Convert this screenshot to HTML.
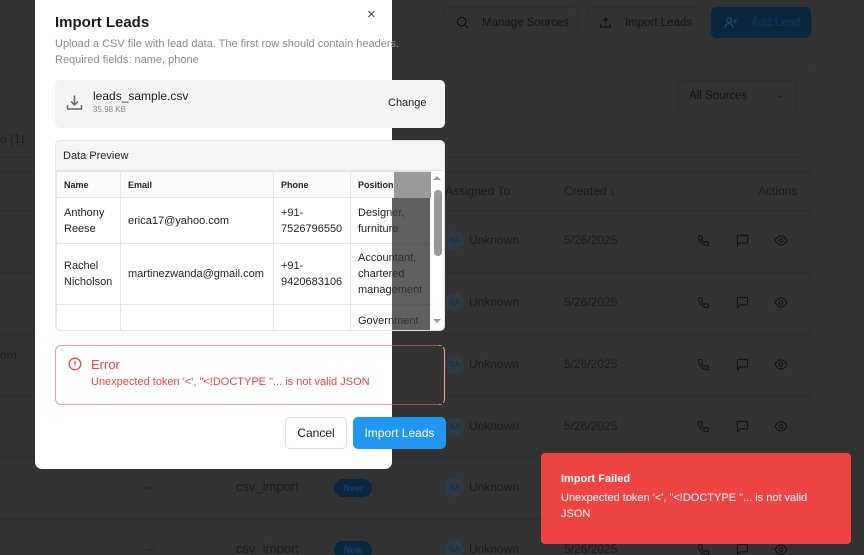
<!DOCTYPE html>
<html style="background:#333"><head><meta charset="utf-8"><style>
*{box-sizing:border-box;margin:0;padding:0}
html,body{width:864px;height:555px;overflow:hidden;background:#333333}
body{font-family:"Liberation Sans","DejaVu Sans",sans-serif;position:relative;color:#1a1a1a}
.a{position:absolute}
.bg{color:#1c1c1c;font-size:12px}
.line{position:absolute;height:1px;background:#2c2c2c}
.btn{position:absolute;border:1px solid #2e2e2e;border-radius:5px;font-size:11.5px;color:#141414;display:flex;align-items:center}
.na{position:absolute;width:19px;height:19px;border-radius:50%;background:#2f3a44;color:#10304d;font-size:8px;display:flex;align-items:center;justify-content:center}
.modal{position:absolute;left:35px;top:-8px;width:357px;height:477px;background:#fff;border-radius:7px}
td{border:1px solid #e6e6e6;font-size:11px;padding:0 7px;vertical-align:middle;line-height:16px;color:#222}
table{border-collapse:collapse;table-layout:fixed}
th{border:1px solid #e6e6e6;font-size:9px;font-weight:bold;text-align:left;padding:0 7px;height:26px;background:#fafafa;color:#222}
</style></head><body>
<div class="a" style="left:0;top:0;width:864px;height:555px;background:#333333"></div>
<div class="btn" style="left:442px;top:7px;width:136px;height:31px;padding-left:13px"><svg width="13" height="13" viewBox="0 0 14 14" fill="none" stroke="#141414" stroke-width="1.4"><circle cx="6" cy="6" r="4.5"/><path d="M9.5 9.5L13 13"/></svg><span style="margin-left:13px">Manage Sources</span></div>
<div class="btn" style="left:586px;top:7px;width:119px;height:31px;padding-left:12px"><svg width="13" height="13" viewBox="0 0 14 14" fill="none" stroke="#141414" stroke-width="1.4"><path d="M7 9V2M4 5l3-3 3 3M2 9v3h10V9"/></svg><span style="margin-left:13px">Import Leads</span></div>
<div class="btn" style="left:711px;top:7px;width:100px;height:31px;padding-left:12px;background:#0b2740;border-color:#0b2740;color:#0f3a5e"><svg width="14" height="13" viewBox="0 0 14 13" fill="none" stroke="#184a73" stroke-width="1.3"><circle cx="5" cy="4" r="2.5"/><path d="M1 12c0-3 2-4.5 4-4.5s4 1.5 4 4.5M11 3v4M9 5h4"/></svg><span style="margin-left:13px">Add Lead</span></div>
<div class="a" style="left:-10px;top:66px;width:820px;height:500px;border:1px solid #303030;border-radius:8px"></div>
<div class="btn" style="left:678px;top:80px;width:119px;height:31px;padding-left:10px;justify-content:space-between;padding-right:12px"><span>All Sources</span><span style="font-size:9px">&#8964;</span></div>
<div class="line" style="left:0;top:157px;width:797px"></div>
<div class="line" style="left:0;top:171px;width:810px"></div>
<div class="a bg" style="left:0;top:132px;font-size:12px">o (1)</div>
<div class="a bg" style="left:445px;top:184px">Assigned To</div>
<div class="a bg" style="left:564px;top:184px">Created ↓</div>
<div class="a bg" style="left:758px;top:184px">Actions</div>
<div class="a bg" style="left:0;top:348px">om</div>
<div id="rows"></div>
<script>
var ys=[241,303,365,427,488,550],h='';
ys.forEach(function(y,i){
h+='<div class="line" style="left:0;top:'+(y-31)+'px;width:810px"></div>';
h+='<div class="na" style="left:445px;top:'+(y-10)+'px">NA</div>';
h+='<div class="a bg" style="left:469px;top:'+(y-8)+'px;font-size:12px">Unknown</div>';
h+='<div class="a bg" style="left:564px;top:'+(y-8)+'px;font-size:12px">5/26/2025</div>';
h+='<svg class="a" style="left:697px;top:'+(y-7)+'px" width="13" height="13" viewBox="0 0 14 14" fill="none" stroke="#141414" stroke-width="1.2"><path d="M3 1.5l2 .3 1 3-1.3 1.2a8 8 0 003.3 3.3L9.2 8l3 1 .3 2a1.5 1.5 0 01-1.7 1.5A10 10 0 011.5 3.2 1.5 1.5 0 013 1.5z"/></svg>';
h+='<svg class="a" style="left:736px;top:'+(y-7)+'px" width="13" height="13" viewBox="0 0 14 14" fill="none" stroke="#141414" stroke-width="1.2"><path d="M1.5 1.5h11v8h-8l-3 3z"/></svg>';
h+='<svg class="a" style="left:774px;top:'+(y-6)+'px" width="14" height="11" viewBox="0 0 14 11" fill="none" stroke="#141414" stroke-width="1.2"><path d="M1 5.5C3 2 5 1 7 1s4 1 6 4.5C11 9 9 10 7 10S3 9 1 5.5z"/><circle cx="7" cy="5.5" r="1.8"/></svg>';
if(i>=4){h+='<div class="a bg" style="left:146px;top:'+(y-8)+'px">--</div><div class="a bg" style="left:236px;top:'+(y-9)+'px;font-size:13px">csv_import</div><div class="a" style="left:334px;top:'+(y-9)+'px;width:38px;height:18px;border-radius:9px;background:#0b2740;color:#15426a;font-size:9px;font-weight:bold;text-align:center;line-height:18px">New</div>';}
});
document.getElementById('rows').innerHTML=h;
</script>
<div class="modal"></div>
<div class="a" style="left:55px;top:14px;font-size:15px;font-weight:bold;color:#1a1a1a">Import Leads</div>
<div class="a" style="left:367px;top:6px;font-size:15px;color:#444">×</div>
<div class="a" style="left:55px;top:36px;font-size:11px;color:#8a8a8a;line-height:16px;width:350px;white-space:nowrap">Upload a CSV file with lead data. The first row should contain headers.<br>Required fields: name, phone</div>
<div class="a" style="left:55px;top:80px;width:390px;height:48px;background:#f4f4f3;border-radius:5px"></div>
<svg class="a" style="left:66px;top:94px" width="17" height="17" viewBox="0 0 17 17" fill="none" stroke="#666" stroke-width="1.5"><path d="M8.5 1.5v9M5 7.5l3.5 3.5 3.5-3.5M1.5 11v4h14v-4"/></svg>
<div class="a" style="left:93px;top:89px;font-size:12px;color:#1a1a1a">leads_sample.csv</div>
<div class="a" style="left:93px;top:105px;font-size:8px;color:#888">35.98 KB</div>
<div class="a" style="left:388px;top:97px;font-size:11px;color:#1a1a1a">Change</div>
<div class="a" style="left:55px;top:140px;width:390px;height:191px;border:1px solid #e3e3e3;border-radius:5px;overflow:hidden;background:#fff">
<div style="height:30px;background:#f5f5f4;font-size:11px;padding:9px 7px;color:#222;border-bottom:1px solid #e3e3e3">Data Preview</div>
<table style="width:375px">
<colgroup><col style="width:64px"><col style="width:153px"><col style="width:77px"><col style="width:81px"></colgroup>
<tr><th>Name</th><th>Email</th><th>Phone</th><th style="position:relative">Position<div style="position:absolute;left:43px;top:0;width:38px;height:26px;background:#999"></div></th></tr>
<tr style="height:46px"><td>Anthony Reese</td><td>erica17@yahoo.com</td><td>+91-<br>7526796550</td><td style="white-space:nowrap">Designer,<br>furniture</td></tr>
<tr style="height:61px"><td>Rachel Nicholson</td><td>martinezwanda@gmail.com</td><td>+91-<br>9420683106</td><td style="white-space:nowrap">Accountant,<br>chartered<br>management</td></tr>
<tr style="height:28px"><td></td><td></td><td></td><td style="vertical-align:bottom;padding-bottom:3px">Government</td></tr>
</table>
<div style="position:absolute;left:375px;top:30px;width:14px;height:160px;background:#fff"></div>
<div style="position:absolute;left:378px;top:49px;width:8px;height:66px;background:#999;border-radius:4px"></div>
<div style="position:absolute;left:377px;top:35px;border:4px solid transparent;border-bottom:4px solid #999;border-top:0"></div>
<div style="position:absolute;left:377px;top:178px;border:4px solid transparent;border-top:4px solid #999;border-bottom:0"></div>
</div>
<div class="a" style="left:392px;top:198px;width:38px;height:132px;background:rgba(51,51,51,.78)"></div>
<div class="a" style="left:55px;top:345px;width:390px;height:60px;border:1px solid #f79b9b;border-radius:6px"></div>
<div class="a" style="left:392px;top:346px;width:51px;height:58px;background:#333"></div>
<div class="a" style="left:392px;top:345px;width:47px;height:1px;background:#9a5050"></div>
<div class="a" style="left:392px;top:404px;width:47px;height:1px;background:#9a5050"></div>
<svg class="a" style="left:68px;top:357px" width="14" height="14" viewBox="0 0 14 14" fill="none" stroke="#ef4444" stroke-width="1.3"><circle cx="7" cy="7" r="5.8"/><path d="M7 4v3.5M7 9.5v.5"/></svg>
<div class="a" style="left:91px;top:357px;font-size:13px;color:#ef4444">Error</div>
<div class="a" style="left:91px;top:376px;font-size:11px;color:#ef4444;white-space:nowrap">Unexpected token '&lt;', "&lt;!DOCTYPE "... is not valid JSON</div>
<div class="a" style="left:285px;top:417px;width:62px;height:32px;border:1px solid #ddd;border-radius:5px;font-size:12px;text-align:center;line-height:30px;color:#1a1a1a;background:#fff">Cancel</div>
<div class="a" style="left:353px;top:417px;width:93px;height:32px;background:#2196f3;border-radius:5px;font-size:12px;text-align:center;line-height:32px;color:#fff">Import Leads</div>
<div class="a" style="left:541px;top:453px;width:310px;height:91px;background:#ef4444;border-radius:4px;color:#fff;padding:20px 20px">
<div style="font-size:11px;font-weight:bold">Import Failed</div>
<div style="font-size:11px;line-height:16px;margin-top:5px">Unexpected token '&lt;', "&lt;!DOCTYPE "... is not valid JSON</div>
</div>
</body></html>
